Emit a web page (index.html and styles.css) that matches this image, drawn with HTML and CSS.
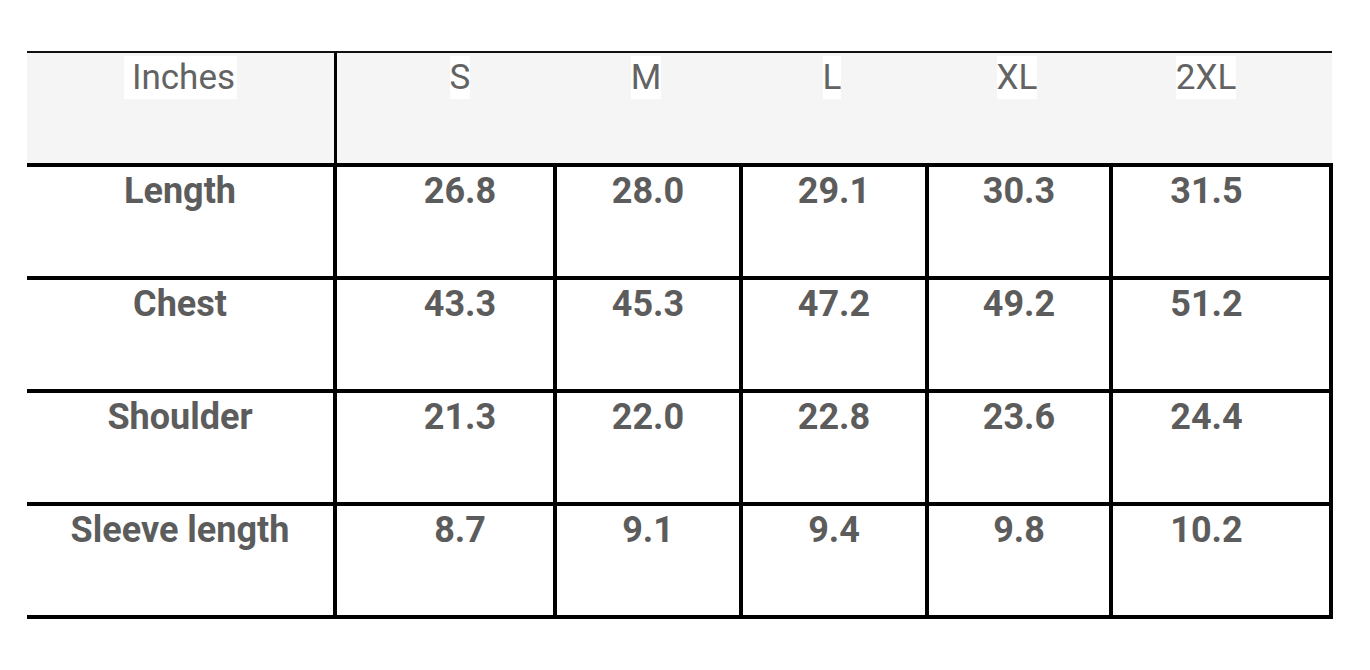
FILE: index.html
```html
<!DOCTYPE html>
<html lang="en">
<head>
<meta charset="utf-8">
<title>Size chart</title>
<link rel="stylesheet" href="styles.css">
</head>
<body>
<div class="chart">
  <div class="head">
    <div class="hcell first"><span class="label lead">Inches</span></div>
    <div class="hcell s"><span class="label">S</span></div>
    <div class="hcell"><span class="label">M</span></div>
    <div class="hcell"><span class="label">L</span></div>
    <div class="hcell"><span class="label">XL</span></div>
    <div class="hcell xxl"><span class="label">2XL</span></div>
  </div>
  <div class="rows">
    <div class="row">
      <div class="cell first">Length</div>
      <div class="cell s">26.8</div>
      <div class="cell">28.0</div>
      <div class="cell">29.1</div>
      <div class="cell">30.3</div>
      <div class="cell xxl">31.5</div>
    </div>
    <div class="row">
      <div class="cell first">Chest</div>
      <div class="cell s">43.3</div>
      <div class="cell">45.3</div>
      <div class="cell">47.2</div>
      <div class="cell">49.2</div>
      <div class="cell xxl">51.2</div>
    </div>
    <div class="row">
      <div class="cell first">Shoulder</div>
      <div class="cell s">21.3</div>
      <div class="cell">22.0</div>
      <div class="cell">22.8</div>
      <div class="cell">23.6</div>
      <div class="cell xxl">24.4</div>
    </div>
    <div class="row">
      <div class="cell first">Sleeve length</div>
      <div class="cell s">8.7</div>
      <div class="cell">9.1</div>
      <div class="cell">9.4</div>
      <div class="cell">9.8</div>
      <div class="cell xxl">10.2</div>
    </div>
  </div>
</div>
</body>
</html>
```

FILE: styles.css
```css
html, body {
  margin: 0;
  padding: 0;
  background: #ffffff;
}

body {
  font-family: Roboto, "Liberation Sans", Arial, sans-serif;
}

.chart {
  margin: 51px 0 0 27px;
  width: 1306px;
}

.head {
  display: grid;
  grid-template-columns: 307px 219px 186px 186px 184px 223px;
  width: 1305px;
  height: 110px;
  border-top: 2px solid #111;
  background: #f5f5f5;
}

.hcell {
  text-align: center;
  padding-top: 4px;
  font-size: 35px;
  font-weight: 400;
  line-height: normal;
  color: #636363;
}

.hcell.s {
  border-left: 3px solid #000;
  padding-left: 30px;
}

.hcell.xxl {
  padding-right: 29px;
}

.label {
  background: #ffffff;
  padding: 1px 0;
}

.label.lead {
  padding-left: 8px;
  padding-right: 2px;
}

.rows {
  border-top: 4px solid #000;
}

.row {
  display: grid;
  grid-template-columns: 306px 220px 186px 186px 184px 224px;
  height: 109px;
  border-bottom: 4px solid #000;
}

.cell {
  text-align: center;
  padding-top: 3px;
  font-size: 36px;
  font-weight: 700;
  line-height: normal;
  color: #5c5c5c;
}

.cell + .cell {
  border-left: 4px solid #000;
}

.cell.s {
  padding-left: 30px;
}

.cell.xxl {
  border-right: 4px solid #000;
  padding-right: 29px;
}
```
